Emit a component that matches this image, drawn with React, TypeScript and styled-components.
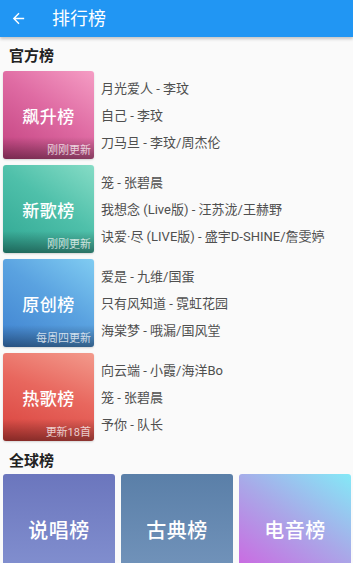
import React from "react";
import styled, { createGlobalStyle } from "styled-components";

const GlobalStyle = createGlobalStyle`
  html, body {
    margin: 0;
    padding: 0;
    background: #fafafa;
    font-family: Roboto, "Noto Sans CJK SC", "Noto Sans", sans-serif;
  }
`;

const Page = styled.div`
  width: 353px;
  height: 563px;
  overflow: hidden;
  background: #fafafa;
`;

const Toolbar = styled.div`
  height: 37px;
  display: flex;
  align-items: center;
  background: #2196f3;
  box-shadow: 0 2px 3px rgba(0, 0, 0, 0.22);
  position: relative;
  z-index: 1;
`;

const BackButton = styled.div`
  width: 52px;
  padding-left: 10px;
  box-sizing: border-box;
  display: flex;
  align-items: center;
`;

const Title = styled.div`
  color: #fff;
  font-size: 18px;
  line-height: 20px;
`;

const SectionTitle = styled.div<{ $top: number; $bottom: number }>`
  padding: ${(p) => p.$top}px 9px ${(p) => p.$bottom}px;
  font-size: 15px;
  line-height: 19px;
  font-weight: bold;
  color: #222;
`;

const Rows = styled.div`
  display: flex;
  flex-direction: column;
  gap: 6px;
`;

const Row = styled.div`
  display: flex;
  align-items: center;
  padding-left: 3px;
`;

const Cover = styled.div<{ $bg: string }>`
  position: relative;
  width: 91px;
  height: 88px;
  flex: none;
  border-radius: 3px;
  overflow: hidden;
  background: ${(p) => p.$bg};
  display: flex;
  align-items: center;
  justify-content: center;
  box-shadow: 0 1px 2px rgba(0, 0, 0, 0.15);
`;

const CoverName = styled.div`
  color: #fff;
  font-size: 17px;
  font-weight: 500;
  letter-spacing: 0.5px;
`;

const Shade = styled.div`
  position: absolute;
  left: 0;
  right: 0;
  bottom: 0;
  height: 22px;
  background: linear-gradient(to bottom, rgba(0, 0, 0, 0), rgba(0, 0, 0, 0.38));
`;

const UpdateTag = styled.div`
  position: absolute;
  right: 3px;
  bottom: 1px;
  font-size: 11px;
  line-height: 14px;
  color: rgba(255, 255, 255, 0.75);
`;

const Songs = styled.div`
  display: flex;
  flex-direction: column;
  padding-left: 7px;
`;

const Song = styled.div`
  font-size: 13px;
  line-height: 27px;
  color: #4f4f4f;
  white-space: nowrap;
`;

const Grid = styled.div`
  display: grid;
  grid-template-columns: repeat(3, 1fr);
  gap: 6px;
  padding: 0 2px 0 3px;
`;

const Tile = styled.div<{ $bg: string }>`
  height: 110px;
  border-radius: 3px;
  background: ${(p) => p.$bg};
  display: flex;
  align-items: center;
  justify-content: center;
  color: #fff;
  font-size: 20px;
  font-weight: 500;
  letter-spacing: 0.5px;
`;

const official = [
  {
    name: "飙升榜",
    tag: "刚刚更新",
    bg: "linear-gradient(35deg, #c2417f 0%, #df6ba3 55%, #f59dc4 100%)",
    songs: ["月光爱人 - 李玟", "自己 - 李玟", "刀马旦 - 李玟/周杰伦"],
  },
  {
    name: "新歌榜",
    tag: "刚刚更新",
    bg: "linear-gradient(35deg, #2fa692 0%, #4fc0aa 55%, #86dcc6 100%)",
    songs: ["笼 - 张碧晨", "我想念 (Live版) - 汪苏泷/王赫野", "诀爱·尽 (LIVE版) - 盛宇D-SHINE/詹雯婷"],
  },
  {
    name: "原创榜",
    tag: "每周四更新",
    bg: "linear-gradient(35deg, #3f82d0 0%, #5aa2e0 55%, #80ccf2 100%)",
    songs: ["爱是 - 九维/国蛋", "只有风知道 - 霓虹花园", "海棠梦 - 哦漏/国风堂"],
  },
  {
    name: "热歌榜",
    tag: "更新18首",
    bg: "linear-gradient(20deg, #d8413c 0%, #e8675e 55%, #f39a8c 100%)",
    songs: ["向云端 - 小霞/海洋Bo", "笼 - 张碧晨", "予你 - 队长"],
  },
];

const global = [
  { name: "说唱榜", bg: "linear-gradient(to bottom, #6b76bd, #8593d2)" },
  { name: "古典榜", bg: "linear-gradient(to bottom, #5a7fa8, #7596bd)" },
  { name: "电音榜", bg: "linear-gradient(215deg, #84e9f7 0%, #a9a8e8 45%, #d25de0 100%)" },
];

function BackArrow() {
  return (
    <svg width="17" height="17" viewBox="0 0 24 24" fill="#fff">
      <path d="M20 11H7.83l5.59-5.59L12 4l-8 8 8 8 1.41-1.41L7.83 13H20v-2z" />
    </svg>
  );
}

export default function App() {
  return (
    <Page>
      <GlobalStyle />
      <Toolbar>
        <BackButton>
          <BackArrow />
        </BackButton>
        <Title>排行榜</Title>
      </Toolbar>
      <SectionTitle $top={10} $bottom={5}>官方榜</SectionTitle>
      <Rows>
        {official.map((board) => (
          <Row key={board.name}>
            <Cover $bg={board.bg}>
              <CoverName>{board.name}</CoverName>
              <Shade />
              <UpdateTag>{board.tag}</UpdateTag>
            </Cover>
            <Songs>
              {board.songs.map((song) => (
                <Song key={song}>{song}</Song>
              ))}
            </Songs>
          </Row>
        ))}
      </Rows>
      <SectionTitle $top={11} $bottom={3}>全球榜</SectionTitle>
      <Grid>
        {global.map((board) => (
          <Tile key={board.name} $bg={board.bg}>
            {board.name}
          </Tile>
        ))}
      </Grid>
    </Page>
  );
}
